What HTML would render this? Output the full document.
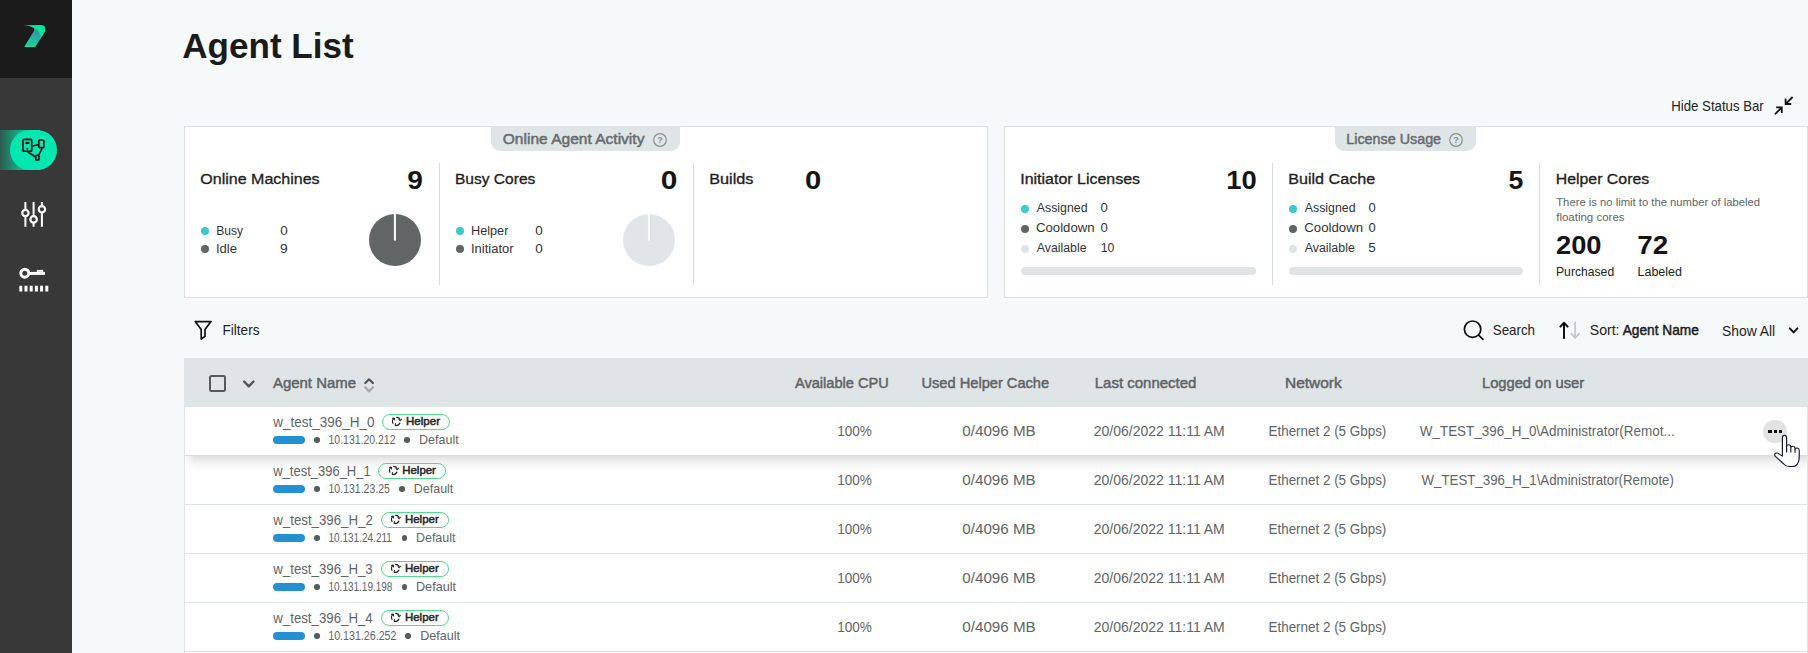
<!DOCTYPE html>
<html lang="en">
<head>
<meta charset="utf-8">
<title>Agent List</title>
<style>
*{box-sizing:border-box;margin:0;padding:0}
html,body{width:1808px;height:653px;overflow:hidden;background:#f6f9fa;font-family:"Liberation Sans",sans-serif;color:#1e1e1e}
.a{position:absolute;white-space:nowrap;line-height:1;transform-origin:0 0}
#side{position:absolute;left:0;top:0;width:72px;height:653px;background:#383838}
#logo{position:absolute;left:0;top:0;width:72px;height:78px;background:#1b1b1b}
#navfade{position:absolute;left:0;top:130px;width:40px;height:40px;background:linear-gradient(90deg,#2d5a4e 0,#0fc492 24px,#02e6b0 34px)}
#navpill{position:absolute;left:10px;top:130px;width:47px;height:40px;border-radius:20px;background:#02e6b0}
.panel{position:absolute;top:126px;height:172px;background:#fff;border:1px solid #d9dfe2}
.tab{position:absolute;top:126px;height:25px;background:#dfe4e7;border-radius:0 0 9px 9px}
.vd{position:absolute;top:163px;width:1px;height:122px;background:#d5dbde}
.dot{position:absolute;width:8px;height:8px;border-radius:50%}
.c1{background:#3cc8cf}.c2{background:#5f6566}.c3{background:#dfe4e7}
.bar{position:absolute;height:8px;border-radius:4px;background:#dfe4e7}
#thead{position:absolute;left:184px;top:358px;width:1624px;height:49px;background:#dfe4e7}
.row{position:absolute;left:184px;width:1624px;height:49px;background:#fff;border-left:1px solid #dfe4e7;border-right:1px solid #dfe4e7;border-bottom:1px solid #dde2e5}
.row.hov{border-bottom-color:#d6dde0}
#shadow::before{content:'';position:absolute;left:0;top:0;width:10px;height:17px;background:linear-gradient(90deg,rgba(255,255,255,.9),rgba(255,255,255,0))}
#shadow{position:absolute;left:185px;top:456px;width:1622px;height:17px;background:linear-gradient(180deg,rgba(0,0,0,.125) 0,rgba(0,0,0,.085) 20%,rgba(0,0,0,.045) 45%,rgba(0,0,0,.018) 70%,rgba(0,0,0,0) 100%);z-index:2}
.badge{position:absolute;width:68px;height:15.5px;border:1px solid #4fdc8c;border-radius:8px;background:#fff}
.pill{position:absolute;width:32px;height:8px;border-radius:4px;background:#2490d4}
.sd{position:absolute;width:5.6px;height:5.6px;border-radius:50%;background:#565c5e}
#fg{position:absolute;left:0;top:0;z-index:3}
</style>
</head>
<body>
<div id="side">
  <div id="logo">
    <svg class="a" style="left:20px;top:22px" width="30" height="28" viewBox="20 22 30 28">
      <defs><linearGradient id="lg1" x1="0.7" y1="0.1" x2="0.3" y2="1"><stop offset="0" stop-color="#3f86a3"/><stop offset="1" stop-color="#14d79c"/></linearGradient></defs>
      <path d="M24.2 46.9 L33.6 31.6 Q35.6 28 31 26.4 L40 26 L44.8 31.6 L35.3 46.9 Z" fill="url(#lg1)"/>
      <path d="M22.9 25.2 L41 25 Q46.6 25.2 45 31.2 L40.6 38.4 Q40.8 32.4 35 28.6 Q30.5 25.6 22.9 25.2 Z" fill="#05e69c"/>
    </svg>
  </div>
  <div id="navfade"></div><div id="navpill"></div>
  <!-- agents icon -->
  <svg class="a" style="left:20px;top:136px" width="28" height="28" viewBox="20 136 28 28" fill="none" stroke="#111" stroke-width="1.6" stroke-linejoin="round" stroke-linecap="round">
    <rect x="22.9" y="139.4" width="8.8" height="11.9" rx=".9"/>
    <path d="M25.3 142.9h4" stroke-width="2.1" stroke-linecap="butt"/><circle cx="27.2" cy="148.9" r=".45" fill="#111" stroke-width="1"/>
    <rect x="38.8" y="140" width="5.1" height="7.6" rx=".8"/>
    <rect x="35.7" y="155.3" width="3.3" height="4.6" rx=".7"/>
    <path d="M32.2 146 L38.4 144.8 M27.8 152 L35.6 157 M42.2 148.2 L38.7 155"/>
  </svg>
  <!-- sliders icon -->
  <svg class="a" style="left:18px;top:200px" width="32" height="30" viewBox="18 200 32 30" fill="none" stroke="#fff" stroke-width="2">
    <path d="M25.4 202v7.6M25.4 216.4v10.4M33.6 202v14M33.6 222.8v4M41.9 202v4M41.9 212.6v14.2"/>
    <circle cx="25.4" cy="213" r="3.2" stroke-width="2.2"/><circle cx="33.6" cy="219.4" r="3.2" stroke-width="2.2"/><circle cx="41.9" cy="209.3" r="3.2" stroke-width="2.2"/>
  </svg>
  <!-- key icon -->
  <svg class="a" style="left:16px;top:262px" width="36" height="32" viewBox="16 262 36 32" fill="none" stroke="#fff" stroke-width="2.2">
    <circle cx="24.8" cy="273.2" r="4" stroke-width="3"/>
    <path d="M29.6 273.4H45" stroke-width="3"/>
    <path d="M36.8 270.9h6.4" stroke-width="2"/>
    <path d="M19.3 288.6h29" stroke-width="5.6" stroke-dasharray="3 2.2"/>
  </svg>
</div>

<div class="panel" style="left:184px;width:804px"></div>
<div class="panel" style="left:1004px;width:804px"></div>
<div class="tab" style="left:491px;width:189px"></div>
<div class="tab" style="left:1335px;width:141px"></div>
<!-- help icons -->
<svg class="a" style="left:652px;top:132px" width="16" height="16" viewBox="0 0 16 16"><circle cx="8" cy="8" r="6.3" fill="none" stroke="#8a9093" stroke-width="1.2"/><text x="8" y="11.2" font-family="Liberation Sans, sans-serif" font-size="9" font-weight="bold" fill="#8a9093" text-anchor="middle">?</text></svg>
<svg class="a" style="left:1448px;top:132px" width="16" height="16" viewBox="0 0 16 16"><circle cx="8" cy="8" r="6.3" fill="none" stroke="#8a9093" stroke-width="1.2"/><text x="8" y="11.2" font-family="Liberation Sans, sans-serif" font-size="9" font-weight="bold" fill="#8a9093" text-anchor="middle">?</text></svg>
<!-- hide status bar icon -->
<svg class="a" style="left:1773px;top:95px" width="22" height="22" viewBox="1773 95 22 22" fill="none" stroke="#111" stroke-width="1.8">
  <path d="M1792.6 97 L1786 103.6 M1785.6 98.4 V104 H1791.2"/>
  <path d="M1774.8 114.4 L1781.4 107.8 M1781.8 113 V107.4 H1776.2"/>
</svg>

<div class="vd" style="left:439px"></div>
<div class="vd" style="left:693px"></div>
<div class="vd" style="left:1272px"></div>
<div class="vd" style="left:1539px"></div>

<!-- panel 1 legend dots + pies -->
<div class="dot c1" style="left:201px;top:227.4px"></div>
<div class="dot c2" style="left:201px;top:245.2px"></div>
<svg class="a" style="left:369px;top:214px" width="52" height="52" viewBox="0 0 52 52"><circle cx="26" cy="26" r="26" fill="#606666"/><rect x="24.9" y="0" width="2" height="26.6" fill="#fff"/></svg>
<div class="dot c1" style="left:456px;top:227.4px"></div>
<div class="dot c2" style="left:456px;top:245.2px"></div>
<svg class="a" style="left:623px;top:214px" width="52" height="52" viewBox="0 0 52 52"><circle cx="26" cy="26" r="26" fill="#dfe5e9"/><rect x="24.9" y="0" width="2" height="26.6" fill="#fff"/></svg>

<!-- panel 2 legend dots + bars -->
<div class="dot c1" style="left:1021px;top:204.8px"></div>
<div class="dot c2" style="left:1021px;top:224.9px"></div>
<div class="dot c3" style="left:1021px;top:244.8px"></div>
<div class="bar" style="left:1021px;top:267px;width:235px"></div>
<div class="dot c1" style="left:1289px;top:204.8px"></div>
<div class="dot c2" style="left:1289px;top:224.9px"></div>
<div class="dot c3" style="left:1289px;top:244.8px"></div>
<div class="bar" style="left:1289px;top:267px;width:234px"></div>

<!-- filter row icons -->
<svg class="a" style="left:192px;top:318px" width="22" height="24" viewBox="192 318 22 24" fill="none" stroke="#111" stroke-width="1.7" stroke-linejoin="round">
  <path d="M195.2 321.6 H211 L205 329.6 V336.4 L201.2 339 V329.6 Z"/>
</svg>
<svg class="a" style="left:1461px;top:318px" width="26" height="24" viewBox="1461 318 26 24" fill="none" stroke="#111" stroke-width="1.7" stroke-linecap="round">
  <circle cx="1472.6" cy="329.2" r="8.2"/><path d="M1478.6 335.2 L1483 339.4"/>
</svg>
<svg class="a" style="left:1556px;top:319px" width="28" height="22" viewBox="1556 319 28 22" fill="none" stroke-width="1.7" stroke-linecap="round" stroke-linejoin="round">
  <path d="M1564 338 V323 M1560.4 326.6 L1564 322.8 L1567.6 326.6" stroke="#111" stroke-width="2"/>
  <path d="M1575.2 322.4 V337.6 M1571.2 333.6 L1575.2 337.8 L1579.2 333.6" stroke="#c0c6c9"/>
</svg>
<svg class="a" style="left:1786px;top:324px" width="16" height="14" viewBox="1786 324 16 14" fill="none" stroke="#111" stroke-width="2" stroke-linecap="round" stroke-linejoin="round">
  <path d="M1789.8 328.4 L1793.6 332.4 L1797.4 328.4"/>
</svg>

<div id="thead"></div>
<!-- header controls -->
<div class="a" style="left:209px;top:375px;width:17px;height:17px;border:2px solid #555b5d;border-radius:2.5px"></div>
<svg class="a" style="left:240px;top:376px" width="18" height="16" viewBox="240 376 18 16" fill="none" stroke="#505658" stroke-width="2.4" stroke-linecap="round" stroke-linejoin="round">
  <path d="M244.1 381.5 L248.8 386.3 L253.5 381.5"/>
</svg>
<svg class="a" style="left:361px;top:376px" width="16" height="20" viewBox="361 376 16 20" fill="none" stroke-width="1.8" stroke-linecap="round" stroke-linejoin="round">
  <path d="M365.3 383 L369.1 379.3 L372.9 383" stroke="#505658" stroke-width="2.2"/>
  <path d="M365.3 387.2 L369.1 391.4 L372.9 387.2" stroke="#a4aaad" stroke-width="2.2"/>
</svg>

<div class="row hov" style="top:407px"></div>
<div class="row" style="top:456px"></div>
<div class="row" style="top:505px"></div>
<div class="row" style="top:554px"></div>
<div class="row" style="top:603px"></div>
<div class="row" style="top:652px"></div>
<div id="shadow"></div>
<div id="fg">
<div class="badge" style="left:382.1px;top:414.2px"></div>
<svg class="a" style="left:391.4px;top:415.8px" width="11" height="11" viewBox="0 0 11 11" fill="none" stroke="#222" stroke-width="1.3"><path d="M2.2 7.6 A3.9 3.9 0 0 1 3.2 2.2 M5.2 1.3 A3.9 3.9 0 0 1 9.3 4.6 M9 6.8 A3.9 3.9 0 0 1 4 9.2"/><path d="M1 2.4 L3.4 2 L3.6 4.4 M7.6 3.6 L9.6 4.8 L10.6 2.8 M6 9.8 L4 9.2 L4.6 7.2" stroke-width="1"/></svg>
<div class="pill" style="left:273px;top:436px"></div>
<div class="sd" style="left:314px;top:437.2px"></div>
<div class="sd" style="left:404.3px;top:437.2px"></div>
<div class="badge" style="left:378.2px;top:463.2px"></div>
<svg class="a" style="left:387.5px;top:464.8px" width="11" height="11" viewBox="0 0 11 11" fill="none" stroke="#222" stroke-width="1.3"><path d="M2.2 7.6 A3.9 3.9 0 0 1 3.2 2.2 M5.2 1.3 A3.9 3.9 0 0 1 9.3 4.6 M9 6.8 A3.9 3.9 0 0 1 4 9.2"/><path d="M1 2.4 L3.4 2 L3.6 4.4 M7.6 3.6 L9.6 4.8 L10.6 2.8 M6 9.8 L4 9.2 L4.6 7.2" stroke-width="1"/></svg>
<div class="pill" style="left:273px;top:485px"></div>
<div class="sd" style="left:314px;top:486.2px"></div>
<div class="sd" style="left:399px;top:486.2px"></div>
<div class="badge" style="left:381px;top:512.2px"></div>
<svg class="a" style="left:390.3px;top:513.8px" width="11" height="11" viewBox="0 0 11 11" fill="none" stroke="#222" stroke-width="1.3"><path d="M2.2 7.6 A3.9 3.9 0 0 1 3.2 2.2 M5.2 1.3 A3.9 3.9 0 0 1 9.3 4.6 M9 6.8 A3.9 3.9 0 0 1 4 9.2"/><path d="M1 2.4 L3.4 2 L3.6 4.4 M7.6 3.6 L9.6 4.8 L10.6 2.8 M6 9.8 L4 9.2 L4.6 7.2" stroke-width="1"/></svg>
<div class="pill" style="left:273px;top:534px"></div>
<div class="sd" style="left:314px;top:535.2px"></div>
<div class="sd" style="left:401.6px;top:535.2px"></div>
<div class="badge" style="left:381px;top:561.2px"></div>
<svg class="a" style="left:390.3px;top:562.8px" width="11" height="11" viewBox="0 0 11 11" fill="none" stroke="#222" stroke-width="1.3"><path d="M2.2 7.6 A3.9 3.9 0 0 1 3.2 2.2 M5.2 1.3 A3.9 3.9 0 0 1 9.3 4.6 M9 6.8 A3.9 3.9 0 0 1 4 9.2"/><path d="M1 2.4 L3.4 2 L3.6 4.4 M7.6 3.6 L9.6 4.8 L10.6 2.8 M6 9.8 L4 9.2 L4.6 7.2" stroke-width="1"/></svg>
<div class="pill" style="left:273px;top:583px"></div>
<div class="sd" style="left:314px;top:584.2px"></div>
<div class="sd" style="left:401.6px;top:584.2px"></div>
<div class="badge" style="left:381px;top:610.2px"></div>
<svg class="a" style="left:390.3px;top:611.8px" width="11" height="11" viewBox="0 0 11 11" fill="none" stroke="#222" stroke-width="1.3"><path d="M2.2 7.6 A3.9 3.9 0 0 1 3.2 2.2 M5.2 1.3 A3.9 3.9 0 0 1 9.3 4.6 M9 6.8 A3.9 3.9 0 0 1 4 9.2"/><path d="M1 2.4 L3.4 2 L3.6 4.4 M7.6 3.6 L9.6 4.8 L10.6 2.8 M6 9.8 L4 9.2 L4.6 7.2" stroke-width="1"/></svg>
<div class="pill" style="left:273px;top:632px"></div>
<div class="sd" style="left:314px;top:633.2px"></div>
<div class="sd" style="left:405.4px;top:633.2px"></div>
<div class="a" id="title" style="left:182px;top:28px;font-size:35px;color:#1b1b1b;font-weight:bold;transform:translateX(0.25px) scaleX(1.0022)">Agent List</div>
<div class="a" id="hide" style="left:1671px;top:99px;font-size:14.2px;color:#222;transform:translateX(0.25px) scaleX(0.9310)">Hide Status Bar</div>
<div class="a" id="tab1" style="left:502px;top:131px;font-size:15.3px;color:#666b6d;-webkit-text-stroke:.5px;transform:translateX(0.75px) scaleX(1.0158)">Online Agent Activity</div>
<div class="a" id="tab2" style="left:1346px;top:131px;font-size:15.3px;color:#666b6d;-webkit-text-stroke:.5px;transform:translateX(0.25px) scaleX(0.9372)">License Usage</div>
<div class="a" id="om" style="left:200px;top:171px;font-size:15.3px;color:#1e1e1e;-webkit-text-stroke:.33px;transform:translateX(0.25px) scaleX(1.0477)">Online Machines</div>
<div class="a" id="om9" style="left:407px;top:167px;font-size:26px;color:#151515;font-weight:bold;transform:translateX(0.25px) scaleX(1.0797)">9</div>
<div class="a" id="busy" style="left:216px;top:225px;font-size:12.5px;color:#333;transform:translateX(0.25px) scaleX(0.9672)">Busy</div>
<div class="a" id="busyv" style="left:280px;top:225px;font-size:12.5px;color:#333;transform:translateX(0.25px) scaleX(1.0765)">0</div>
<div class="a" id="idle" style="left:216px;top:243px;font-size:12.5px;color:#333;transform:scaleX(1.0428)">Idle</div>
<div class="a" id="idlev" style="left:280px;top:243px;font-size:12.5px;color:#333;transform:scaleX(1.1071)">9</div>
<div class="a" id="bc" style="left:455px;top:171px;font-size:15.3px;color:#1e1e1e;-webkit-text-stroke:.33px;transform:scaleX(1.0160)">Busy Cores</div>
<div class="a" id="bc0" style="left:660px;top:167px;font-size:26px;color:#151515;font-weight:bold;transform:translateX(0.75px) scaleX(1.1464)">0</div>
<div class="a" id="hlp" style="left:471px;top:225px;font-size:12.5px;color:#333;transform:scaleX(1.0153)">Helper</div>
<div class="a" id="hlpv" style="left:535px;top:225px;font-size:12.5px;color:#333;transform:translateX(0.25px) scaleX(1.0765)">0</div>
<div class="a" id="ini" style="left:471px;top:243px;font-size:12.5px;color:#333;transform:scaleX(1.0389)">Initiator</div>
<div class="a" id="iniv" style="left:535px;top:243px;font-size:12.5px;color:#333;transform:translateX(0.25px) scaleX(1.0765)">0</div>
<div class="a" id="bu" style="left:709px;top:171px;font-size:15.3px;color:#1e1e1e;-webkit-text-stroke:.33px;transform:translateX(0.25px) scaleX(1.0611)">Builds</div>
<div class="a" id="bu0" style="left:805px;top:167px;font-size:26px;color:#151515;font-weight:bold;transform:scaleX(1.1231)">0</div>
<div class="a" id="il" style="left:1020px;top:171px;font-size:15.3px;color:#1e1e1e;-webkit-text-stroke:.33px;transform:translateX(0.25px) scaleX(1.0435)">Initiator Licenses</div>
<div class="a" id="il10" style="left:1226px;top:167px;font-size:26px;color:#151515;font-weight:bold;transform:translateX(0.25px) scaleX(1.0526)">10</div>
<div class="a" id="la0" style="left:1036px;top:202px;font-size:12.5px;color:#333;transform:translateX(0.75px) scaleX(0.9870)">Assigned</div>
<div class="a" id="lav0" style="left:1100px;top:202px;font-size:12.5px;color:#333;transform:translateX(0.5px) scaleX(1.0495)">0</div>
<div class="a" id="la1" style="left:1036px;top:222px;font-size:12.5px;color:#333;transform:scaleX(1.0551)">Cooldown</div>
<div class="a" id="lav1" style="left:1100px;top:222px;font-size:12.5px;color:#333;transform:translateX(0.5px) scaleX(1.0495)">0</div>
<div class="a" id="la2" style="left:1036px;top:242px;font-size:12.5px;color:#333;transform:translateX(0.75px) scaleX(0.9848)">Available</div>
<div class="a" id="lav2" style="left:1100px;top:242px;font-size:12.5px;color:#333;transform:translateX(0.75px) scaleX(0.9834)">10</div>
<div class="a" id="bch" style="left:1288px;top:171px;font-size:15.3px;color:#1e1e1e;-webkit-text-stroke:.33px;transform:translateX(0.25px) scaleX(1.0532)">Build Cache</div>
<div class="a" id="bch5" style="left:1508px;top:167px;font-size:26px;color:#151515;font-weight:bold;transform:translateX(0.5px) scaleX(1.0230)">5</div>
<div class="a" id="lb0" style="left:1304px;top:202px;font-size:12.5px;color:#333;transform:translateX(0.75px) scaleX(0.9872)">Assigned</div>
<div class="a" id="lbv0" style="left:1368px;top:202px;font-size:12.5px;color:#333;transform:translateX(0.5px) scaleX(1.0372)">0</div>
<div class="a" id="lb1" style="left:1304px;top:222px;font-size:12.5px;color:#333;transform:translateX(0.25px) scaleX(1.0578)">Cooldown</div>
<div class="a" id="lbv1" style="left:1368px;top:222px;font-size:12.5px;color:#333;transform:translateX(0.5px) scaleX(1.0372)">0</div>
<div class="a" id="lb2" style="left:1304px;top:242px;font-size:12.5px;color:#333;transform:translateX(0.75px) scaleX(0.9904)">Available</div>
<div class="a" id="lbv2" style="left:1368px;top:242px;font-size:12.5px;color:#333;transform:translateX(0.25px) scaleX(1.0765)">5</div>
<div class="a" id="hc" style="left:1555px;top:171px;font-size:15.3px;color:#1e1e1e;-webkit-text-stroke:.33px;transform:translateX(0.75px) scaleX(1.0365)">Helper Cores</div>
<div class="a" id="hcd1" style="left:1556px;top:197px;font-size:11.3px;color:#5f6466;transform:translateX(0.25px) scaleX(0.9957)">There is no limit to the number of labeled</div>
<div class="a" id="hcd2" style="left:1556px;top:212px;font-size:11.3px;color:#5f6466;transform:translateX(0.25px) scaleX(1.0159)">floating cores</div>
<div class="a" id="n200" style="left:1556px;top:232px;font-size:26px;color:#151515;font-weight:bold;transform:scaleX(1.0486)">200</div>
<div class="a" id="n72" style="left:1637px;top:232px;font-size:26px;color:#151515;font-weight:bold;transform:translateX(0.25px) scaleX(1.0665)">72</div>
<div class="a" id="pur" style="left:1556px;top:266px;font-size:12.5px;color:#222;transform:scaleX(0.9730)">Purchased</div>
<div class="a" id="lab" style="left:1637px;top:266px;font-size:12.5px;color:#222;transform:translateX(0.5px) scaleX(0.9983)">Labeled</div>
<div class="a" id="filters" style="left:222px;top:323px;font-size:14.2px;color:#222;transform:translateX(0.5px) scaleX(0.9566)">Filters</div>
<div class="a" id="search" style="left:1492px;top:323px;font-size:14.2px;color:#222;transform:translateX(0.75px) scaleX(0.9408)">Search</div>
<div class="a" id="sort" style="left:1589px;top:323px;font-size:14.2px;color:#222;transform:translateX(0.75px) scaleX(0.9941)">Sort:</div>
<div class="a" id="sortb" style="left:1622px;top:323px;font-size:14.2px;color:#1e1e1e;-webkit-text-stroke:.5px;transform:translateX(0.75px) scaleX(0.9639)">Agent Name</div>
<div class="a" id="showall" style="left:1722px;top:324px;font-size:14.2px;color:#222;transform:scaleX(0.9774)">Show All</div>
<div class="a" id="th1" style="left:273px;top:375px;font-size:15.3px;color:#5f6466;-webkit-text-stroke:.5px;transform:scaleX(0.9758)">Agent Name</div>
<div class="a" id="th2" style="left:795px;top:375px;font-size:15.3px;color:#5f6466;-webkit-text-stroke:.5px;transform:scaleX(0.9523)">Available CPU</div>
<div class="a" id="th3" style="left:921px;top:375px;font-size:15.3px;color:#5f6466;-webkit-text-stroke:.5px;transform:translateX(0.5px) scaleX(0.9558)">Used Helper Cache</div>
<div class="a" id="th4" style="left:1094px;top:375px;font-size:15.3px;color:#5f6466;-webkit-text-stroke:.5px;transform:translateX(0.75px) scaleX(0.9799)">Last connected</div>
<div class="a" id="th5" style="left:1285px;top:375px;font-size:15.3px;color:#5f6466;-webkit-text-stroke:.5px;transform:scaleX(1.0117)">Network</div>
<div class="a" id="th6" style="left:1482px;top:375px;font-size:15.3px;color:#5f6466;-webkit-text-stroke:.5px;transform:scaleX(0.9602)">Logged on user</div>
<div class="a" id="nm0" style="left:273px;top:416px;font-size:13.9px;color:#5e6467;transform:translateX(0.25px) scaleX(0.9721)">w_test_396_H_0</div>
<div class="a" id="bt0" style="left:406px;top:416px;font-size:10.7px;color:#2a2a2a;-webkit-text-stroke:.5px;transform:scaleX(1.0794)">Helper</div>
<div class="a" id="ip0" style="left:328px;top:434px;font-size:12.1px;color:#5e6467;transform:translateX(0.5px) scaleX(0.8661)">10.131.20.212</div>
<div class="a" id="df0" style="left:419px;top:434px;font-size:12.1px;color:#5e6467;transform:scaleX(1.0385)">Default</div>
<div class="a" id="cpu0" style="left:837px;top:424px;font-size:14.1px;color:#5e6467;transform:translateX(0.25px) scaleX(0.9616)">100%</div>
<div class="a" id="ch0" style="left:962px;top:424px;font-size:14.1px;color:#5e6467;transform:translateX(0.25px) scaleX(1.0783)">0/4096 MB</div>
<div class="a" id="dt0" style="left:1093px;top:424px;font-size:14.1px;color:#5e6467;transform:translateX(0.75px) scaleX(0.9934)">20/06/2022 11:11 AM</div>
<div class="a" id="nw0" style="left:1268px;top:424px;font-size:14.1px;color:#5e6467;transform:translateX(0.5px) scaleX(0.9520)">Ethernet 2 (5 Gbps)</div>
<div class="a" id="us0" style="left:1419px;top:424px;font-size:14.1px;color:#5e6467;transform:translateX(0.75px) scaleX(0.9543)">W_TEST_396_H_0\Administrator(Remot...</div>
<div class="a" id="nm1" style="left:273px;top:465px;font-size:13.9px;color:#5e6467;transform:translateX(0.25px) scaleX(0.9344)">w_test_396_H_1</div>
<div class="a" id="bt1" style="left:402px;top:465px;font-size:10.7px;color:#2a2a2a;-webkit-text-stroke:.5px;transform:translateX(0.25px) scaleX(1.0687)">Helper</div>
<div class="a" id="ip1" style="left:328px;top:483px;font-size:12.1px;color:#5e6467;transform:translateX(0.5px) scaleX(0.8705)">10.131.23.25</div>
<div class="a" id="df1" style="left:413px;top:483px;font-size:12.1px;color:#5e6467;transform:translateX(0.75px) scaleX(1.0330)">Default</div>
<div class="a" id="cpu1" style="left:837px;top:473px;font-size:14.1px;color:#5e6467;transform:translateX(0.25px) scaleX(0.9616)">100%</div>
<div class="a" id="ch1" style="left:962px;top:473px;font-size:14.1px;color:#5e6467;transform:translateX(0.25px) scaleX(1.0783)">0/4096 MB</div>
<div class="a" id="dt1" style="left:1093px;top:473px;font-size:14.1px;color:#5e6467;transform:translateX(0.75px) scaleX(0.9934)">20/06/2022 11:11 AM</div>
<div class="a" id="nw1" style="left:1268px;top:473px;font-size:14.1px;color:#5e6467;transform:translateX(0.5px) scaleX(0.9520)">Ethernet 2 (5 Gbps)</div>
<div class="a" id="us1" style="left:1421px;top:473px;font-size:14.1px;color:#5e6467;transform:translateX(0.5px) scaleX(0.9422)">W_TEST_396_H_1\Administrator(Remote)</div>
<div class="a" id="nm2" style="left:273px;top:514px;font-size:13.9px;color:#5e6467;transform:translateX(0.25px) scaleX(0.9552)">w_test_396_H_2</div>
<div class="a" id="bt2" style="left:405px;top:514px;font-size:10.7px;color:#2a2a2a;-webkit-text-stroke:.5px;transform:scaleX(1.0701)">Helper</div>
<div class="a" id="ip2" style="left:328px;top:532px;font-size:12.1px;color:#5e6467;transform:translateX(0.5px) scaleX(0.8290)">10.131.24.211</div>
<div class="a" id="df2" style="left:416px;top:532px;font-size:12.1px;color:#5e6467;transform:scaleX(1.0290)">Default</div>
<div class="a" id="cpu2" style="left:837px;top:522px;font-size:14.1px;color:#5e6467;transform:translateX(0.25px) scaleX(0.9616)">100%</div>
<div class="a" id="ch2" style="left:962px;top:522px;font-size:14.1px;color:#5e6467;transform:translateX(0.25px) scaleX(1.0783)">0/4096 MB</div>
<div class="a" id="dt2" style="left:1093px;top:522px;font-size:14.1px;color:#5e6467;transform:translateX(0.75px) scaleX(0.9934)">20/06/2022 11:11 AM</div>
<div class="a" id="nw2" style="left:1268px;top:522px;font-size:14.1px;color:#5e6467;transform:translateX(0.5px) scaleX(0.9520)">Ethernet 2 (5 Gbps)</div>
<div class="a" id="nm3" style="left:273px;top:563px;font-size:13.9px;color:#5e6467;transform:translateX(0.25px) scaleX(0.9542)">w_test_396_H_3</div>
<div class="a" id="bt3" style="left:405px;top:563px;font-size:10.7px;color:#2a2a2a;-webkit-text-stroke:.5px;transform:scaleX(1.0701)">Helper</div>
<div class="a" id="ip3" style="left:328px;top:581px;font-size:12.1px;color:#5e6467;transform:translateX(0.5px) scaleX(0.8265)">10.131.19.198</div>
<div class="a" id="df3" style="left:416px;top:581px;font-size:12.1px;color:#5e6467;transform:scaleX(1.0448)">Default</div>
<div class="a" id="cpu3" style="left:837px;top:571px;font-size:14.1px;color:#5e6467;transform:translateX(0.25px) scaleX(0.9616)">100%</div>
<div class="a" id="ch3" style="left:962px;top:571px;font-size:14.1px;color:#5e6467;transform:translateX(0.25px) scaleX(1.0783)">0/4096 MB</div>
<div class="a" id="dt3" style="left:1093px;top:571px;font-size:14.1px;color:#5e6467;transform:translateX(0.75px) scaleX(0.9934)">20/06/2022 11:11 AM</div>
<div class="a" id="nw3" style="left:1268px;top:571px;font-size:14.1px;color:#5e6467;transform:translateX(0.5px) scaleX(0.9520)">Ethernet 2 (5 Gbps)</div>
<div class="a" id="nm4" style="left:273px;top:612px;font-size:13.9px;color:#5e6467;transform:translateX(0.25px) scaleX(0.9542)">w_test_396_H_4</div>
<div class="a" id="bt4" style="left:405px;top:612px;font-size:10.7px;color:#2a2a2a;-webkit-text-stroke:.5px;transform:scaleX(1.0701)">Helper</div>
<div class="a" id="ip4" style="left:328px;top:630px;font-size:12.1px;color:#5e6467;transform:translateX(0.25px) scaleX(0.8818)">10.131.26.252</div>
<div class="a" id="df4" style="left:420px;top:630px;font-size:12.1px;color:#5e6467;transform:translateX(0.25px) scaleX(1.0385)">Default</div>
<div class="a" id="cpu4" style="left:837px;top:620px;font-size:14.1px;color:#5e6467;transform:translateX(0.25px) scaleX(0.9616)">100%</div>
<div class="a" id="ch4" style="left:962px;top:620px;font-size:14.1px;color:#5e6467;transform:translateX(0.25px) scaleX(1.0783)">0/4096 MB</div>
<div class="a" id="dt4" style="left:1093px;top:620px;font-size:14.1px;color:#5e6467;transform:translateX(0.75px) scaleX(0.9934)">20/06/2022 11:11 AM</div>
<div class="a" id="nw4" style="left:1268px;top:620px;font-size:14.1px;color:#5e6467;transform:translateX(0.5px) scaleX(0.9520)">Ethernet 2 (5 Gbps)</div>
<!-- more button -->
<div class="a" style="left:1763.4px;top:420px;width:23.4px;height:23.4px;border-radius:50%;background:#e2e2e2"></div>
<div class="a" style="left:1768.4px;top:430px;width:3.4px;height:3.2px;background:#111"></div>
<div class="a" style="left:1773.6px;top:430px;width:3.4px;height:3.2px;background:#111"></div>
<div class="a" style="left:1778.8px;top:430px;width:3.4px;height:3.2px;background:#111"></div>
<!-- cursor -->
<svg class="a" style="left:1770px;top:432px" width="34" height="40" viewBox="1770 432 34 40" fill="#fff" stroke="#1a1a2e" stroke-width="1" stroke-linejoin="round"><g transform="translate(1784.5,435.4) scale(1.17,1.09) translate(-1782.4,-435.4)">
  <path d="M1780.6 437.6 Q1780.6 435.4 1782.4 435.4 Q1784.2 435.4 1784.2 437.6 V445.4 Q1784.4 444 1786 444 Q1787.8 444 1787.8 446 V446.6 Q1788.2 445.2 1789.8 445.4 Q1791.4 445.6 1791.4 447.4 V448 Q1792 446.8 1793.4 447 Q1795 447.4 1795 449.4 V455.6 Q1795 459 1793.4 461.6 Q1792 464 1788.6 464 H1786.6 Q1783.6 464 1781.6 461.4 L1774.6 454.6 Q1773.2 452.6 1774.8 451.7 Q1776.4 451.1 1778 452.6 L1780.6 454.4 Z"/>
  <path d="M1784.2 445.4 V451 M1787.8 446.6 V451 M1791.4 448 V451.4" fill="none"/>
</g></svg>
</div>
</body>
</html>
